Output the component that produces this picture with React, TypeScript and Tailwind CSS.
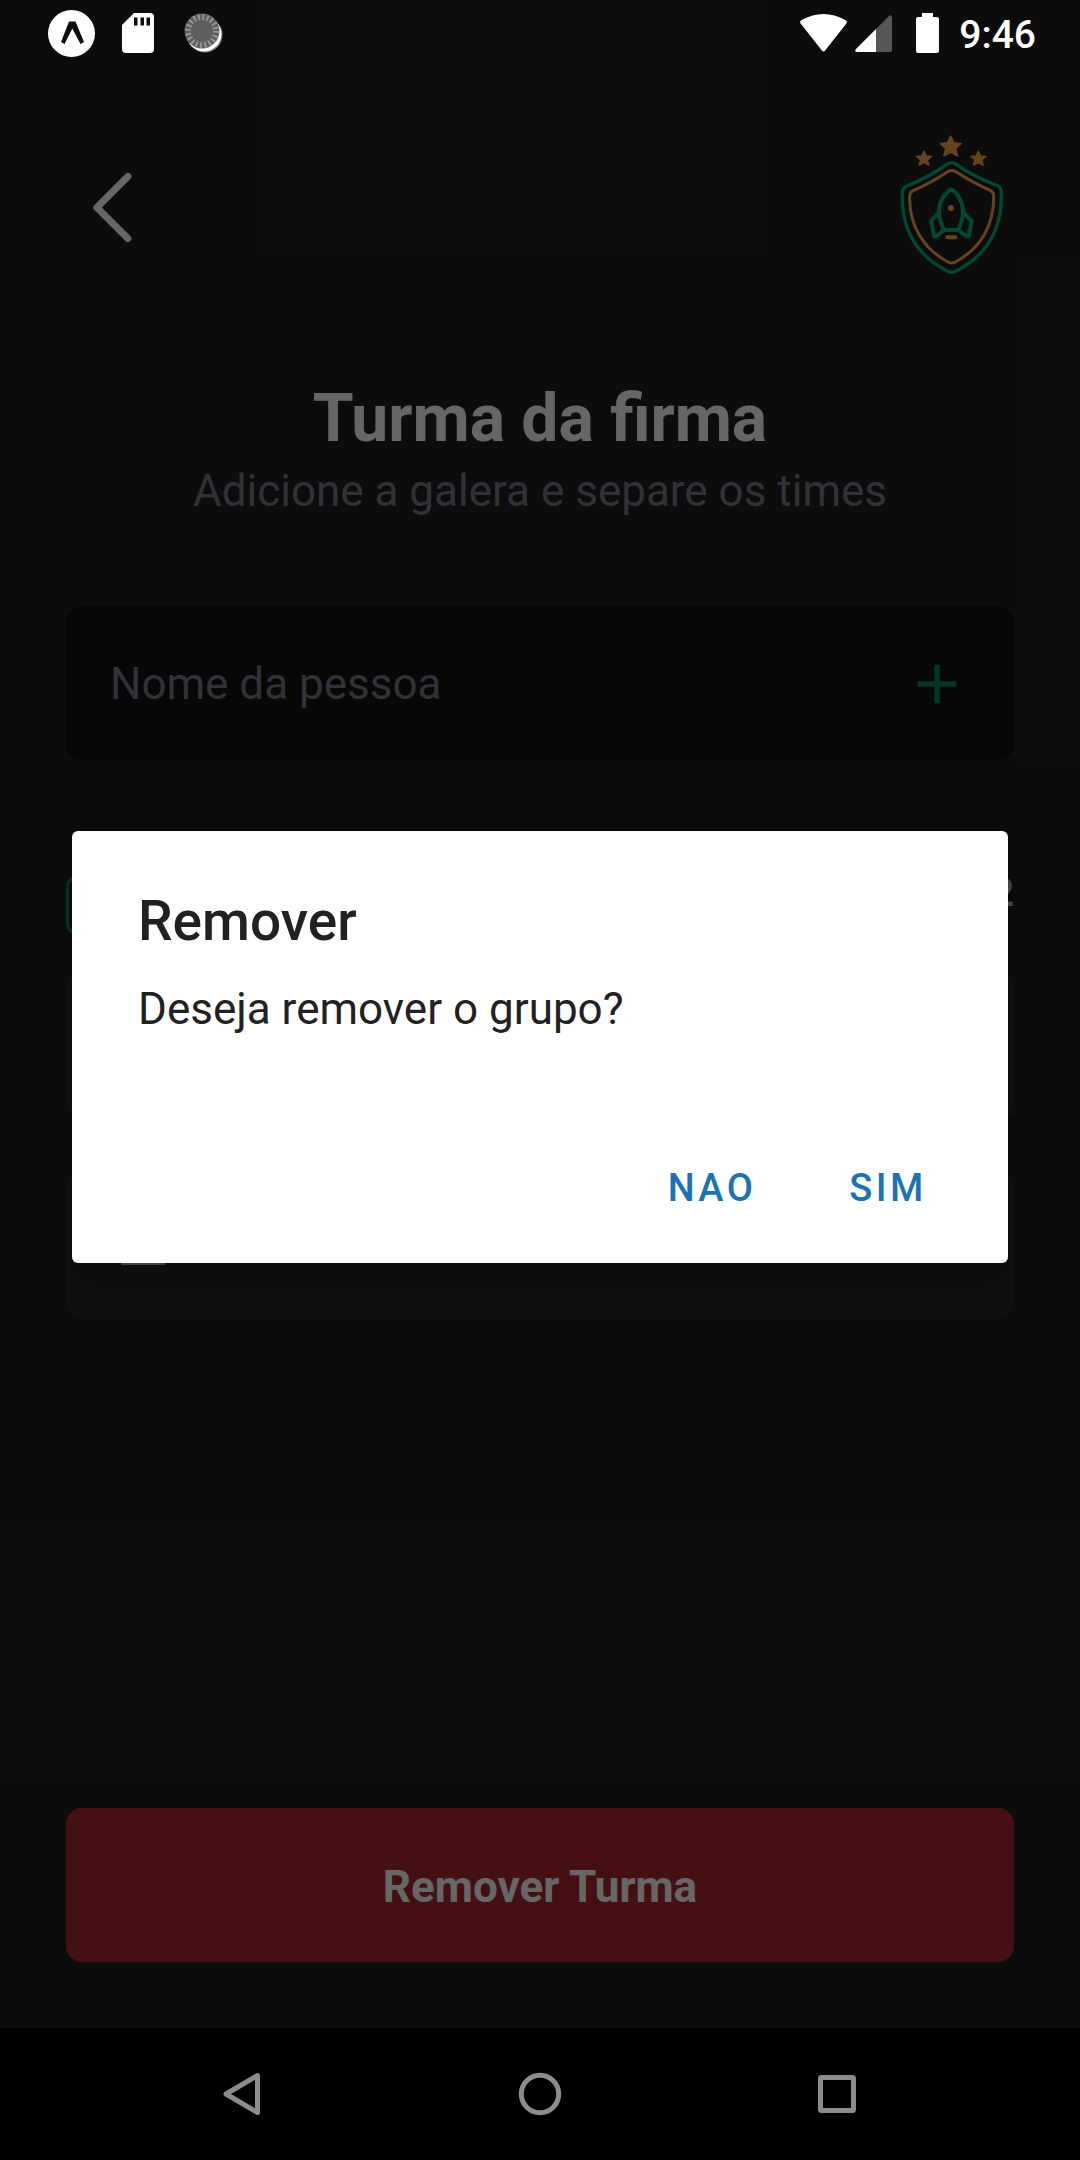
import React from "react";

const STAR = "M0 -31 L9.5 -11.5 L31 -9.5 L14.5 5 L20 27 L0 16 L-20 27 L-14.5 5 L-31 -9.5 L-9.5 -11.5 Z";

function Crest() {
  return (
    <svg viewBox="30 45 372 435" className="h-[145px] w-[124px]" fill="none" strokeLinecap="round" strokeLinejoin="round" aria-label="Ignite Teams" role="img">
      <g fill="#fba94c" stroke="#fba94c" strokeWidth="5">
        <path d={STAR} transform="translate(212 80)" />
        <path d={STAR} transform="translate(132 116) scale(.74)" />
        <path d={STAR} transform="translate(295 116) scale(.74)" />
      </g>
      <path
        d="M203 132 Q215 124 227 132 C270 162 310 181 350 196 Q364 202 364 218 C367 320 325 403 229 453 Q215 461 201 453 C105 403 64 320 67 220 Q67 206 80 199 C122 181 162 160 203 132 Z"
        stroke="#00b37e"
        strokeWidth="10"
      />
      <path
        d="M205 154 Q215 149 226 154 C262 178 298 197 331 211 Q341 216 341 228 C343 312 304 385 226 426 Q215 432 204 426 C127 385 87 312 89 230 Q89 217 99 212 C135 197 170 178 205 154 Z"
        stroke="#fba94c"
        strokeWidth="9"
      />
      <g stroke="#00b37e" strokeWidth="12">
        <path d="M192 330 C170 286 169 247 205 213 Q213 206 221 213 C257 247 256 286 234 330 Z" />
        <path d="M175 279 L153 303 L163 348 Q166 351 170 348 L190 332" />
        <path d="M251 279 L275 303 L266 348 Q263 351 259 348 L236 332" />
      </g>
      <circle cx="213" cy="264" r="9" fill="#fba94c" />
      <path d="M202 352 H226" stroke="#fba94c" strokeWidth="12" />
    </svg>
  );
}

function StatusBar() {
  return (
    <div className="absolute inset-x-0 top-0 z-20 flex h-[66px] items-center justify-between pr-[44px] pl-[48px] text-white">
      <div className="flex items-center gap-[27px]">
        <svg viewBox="0 0 47 47" className="h-[47px] w-[47px]" aria-hidden="true">
          <circle cx="23.500" cy="23.500" r="23.500" fill="#fff" />
          <path d="M21 11.500 H27.500 L36 32 L32.500 34 L24.300 18.500 L16.500 34 L13 32 Z" fill="#0d0d0d" />
        </svg>
        <svg viewBox="0 0 32 40" className="h-[40px] w-[32px]" aria-hidden="true">
          <path d="M12 0 H28 Q32 0 32 4 V36 Q32 40 28 40 H4 Q0 40 0 36 V12 Z" fill="#fff" />
          <path d="M12 4.500 h3.500 v8 h-3.500z M18.500 4.500 h3.500 v8 h-3.500z M24.500 4.500 h3.500 v8 h-3.500z" fill="#0d0d0d" />
        </svg>
        <svg viewBox="0 0 42 42" className="h-[42px] w-[42px]" aria-hidden="true">
          <circle cx="24" cy="23" r="17.500" fill="#777" />
          <circle cx="23" cy="22" r="17.500" fill="#fff" />
          <circle cx="21" cy="19" r="17.500" fill="#5e5e5e" />
          <circle cx="21" cy="19" r="14" fill="none" stroke="#999" strokeWidth="6" strokeDasharray="1.800 2.598" />
        </svg>
      </div>
      <div className="flex items-center">
        <svg viewBox="0 0 47 38" className="h-[38px] w-[47px]" aria-hidden="true">
          <path d="M1 10 Q-1 8 1.500 6 Q23.500 -6 45.500 6 Q48 8 46 10 L25.500 36 Q23.500 39 21.500 36 Z" fill="#fff" />
        </svg>
        <svg viewBox="0 0 37 37" className="ml-2 h-[37px] w-[37px]" aria-hidden="true">
          <path d="M21 14 L34 1 Q37 -1 37 3 V35 Q37 37 35 37 H21 Z" fill="#565656" />
          <path d="M21 14 V37 H2 Q-1 37 1 34 Z" fill="#fff" />
        </svg>
        <svg viewBox="0 0 23 40" className="ml-6 h-[40px] w-[23px]" aria-hidden="true">
          <path d="M6 0 H17 V4 H21 Q23 4 23 6 V38 Q23 40 21 40 H2 Q0 40 0 38 V6 Q0 4 2 4 H6 Z" fill="#fff" />
        </svg>
        <span className="ml-5 pt-1 text-[39px] leading-[46px] font-medium">9:46</span>
      </div>
    </div>
  );
}

function PersonCard() {
  return (
    <li className="flex h-[154px] items-center rounded-2xl bg-[#29292e] px-11">
      <svg viewBox="0 0 24 24" className="h-[66px] w-[66px]" fill="#c4c4cc" aria-hidden="true">
        <path d="M12 12c2.210 0 4-1.790 4-4s-1.790-4-4-4-4 1.790-4 4 1.790 4 4 4zm0 2c-2.670 0-8 1.340-8 4v2h16v-2c0-2.660-5.330-4-8-4z" />
      </svg>
    </li>
  );
}

function GroupScreen() {
  return (
    <main className="flex flex-1 flex-col bg-[#202020] px-[66px] pt-[135px] pb-[66px]">
      <header className="flex items-center justify-between">
        <button aria-label="Voltar">
          <svg viewBox="0 0 256 256" className="h-[99px] w-[99px]" fill="none" stroke="#fff" strokeWidth="18" strokeLinecap="round" strokeLinejoin="round">
            <path d="M160 208 L80 128 L160 48" />
          </svg>
        </button>
        <Crest />
      </header>

      <div className="mt-[100px] flex flex-col gap-2 text-center">
        <h1 className="text-[66px] leading-[77px] font-bold text-white">Turma da firma</h1>
        <p className="text-[44px] leading-[52px] text-[#7c7c8a]">Adicione a galera e separe os times</p>
      </div>

      <form className="mt-[89px] flex h-[154px] items-center rounded-2xl bg-[#121214] px-11 pt-[2px]">
        <input
          aria-label="Nome da pessoa"
          placeholder="Nome da pessoa"
          className="h-full min-w-0 flex-1 bg-transparent text-[44px] text-white outline-none placeholder:text-[#7c7c8a]"
        />
        <button type="button" aria-label="Adicionar">
          <svg viewBox="0 0 24 24" className="h-[66px] w-[66px]" fill="#00875f">
            <path d="M19 13h-6v6h-2v-6H5v-2h6V5h2v6h6v2z" />
          </svg>
        </button>
      </form>

      <div className="mt-[111px] flex items-start justify-between">
        <button aria-label="Time" className="mt-1 h-[60px] w-[192px] rounded-xl border-3 border-[#00875f]" />
        <span className="text-[38px] leading-[44px] font-bold text-[#c4c4cc]">2</span>
      </div>

      <ul className="mt-[33px] flex flex-col gap-11">
        <PersonCard />
        <PersonCard />
      </ul>

      <button className="mt-auto h-[154px] rounded-2xl bg-[#aa2834] pt-1 text-[44px] leading-[52px] font-bold text-white">
        Remover Turma
      </button>
    </main>
  );
}

function ConfirmDialog() {
  return (
    <div className="absolute inset-0 z-10 flex items-center justify-center bg-black/60 px-[72px] pt-[66px] pb-[132px]">
      <div
        role="alertdialog"
        aria-labelledby="dialog-title"
        aria-describedby="dialog-message"
        className="w-full rounded-md bg-white pt-[58px] pb-[26px] text-[#212121] shadow-[0_16px_48px_rgba(0,0,0,0.2)]"
      >
        <h2 id="dialog-title" className="px-[66px] text-[55px] leading-[64px] font-medium">Remover</h2>
        <p id="dialog-message" className="mt-[30px] px-[66px] text-[44px] leading-[52px]">Deseja remover o grupo?</p>
        <div className="mt-[103px] flex justify-end pr-8 text-[38px] leading-[44px] font-medium tracking-[0.09em] text-[#1b72b5]">
          <button className="h-[99px] w-[176px]">NAO</button>
          <button className="h-[99px] w-[176px]">SIM</button>
        </div>
      </div>
    </div>
  );
}

function NavigationBar() {
  return (
    <nav className="z-20 flex h-[132px] items-center bg-black px-[94px]">
      <button aria-label="Anterior" className="flex flex-1 justify-center">
        <svg viewBox="0 0 44 44" className="h-11 w-11" fill="none" stroke="#8c8c8c" strokeWidth="5" strokeLinejoin="round">
          <path d="M36.500 3.500 V40.500 L5 22 Z" />
        </svg>
      </button>
      <button aria-label="Início" className="flex flex-1 justify-center">
        <svg viewBox="0 0 44 44" className="h-11 w-11" fill="none" stroke="#8c8c8c" strokeWidth="5">
          <circle cx="22" cy="22" r="18.700" />
        </svg>
      </button>
      <button aria-label="Recentes" className="flex flex-1 justify-center">
        <svg viewBox="0 0 44 44" className="h-11 w-11" fill="none" stroke="#8c8c8c" strokeWidth="5" strokeLinejoin="round">
          <rect x="5.500" y="5.500" width="33" height="33" rx="1" />
        </svg>
      </button>
    </nav>
  );
}

export default function App() {
  return (
    <div className="relative flex min-h-screen flex-col overflow-hidden bg-black font-[Roboto,sans-serif]">
      <StatusBar />
      <GroupScreen />
      <ConfirmDialog />
      <NavigationBar />
    </div>
  );
}
